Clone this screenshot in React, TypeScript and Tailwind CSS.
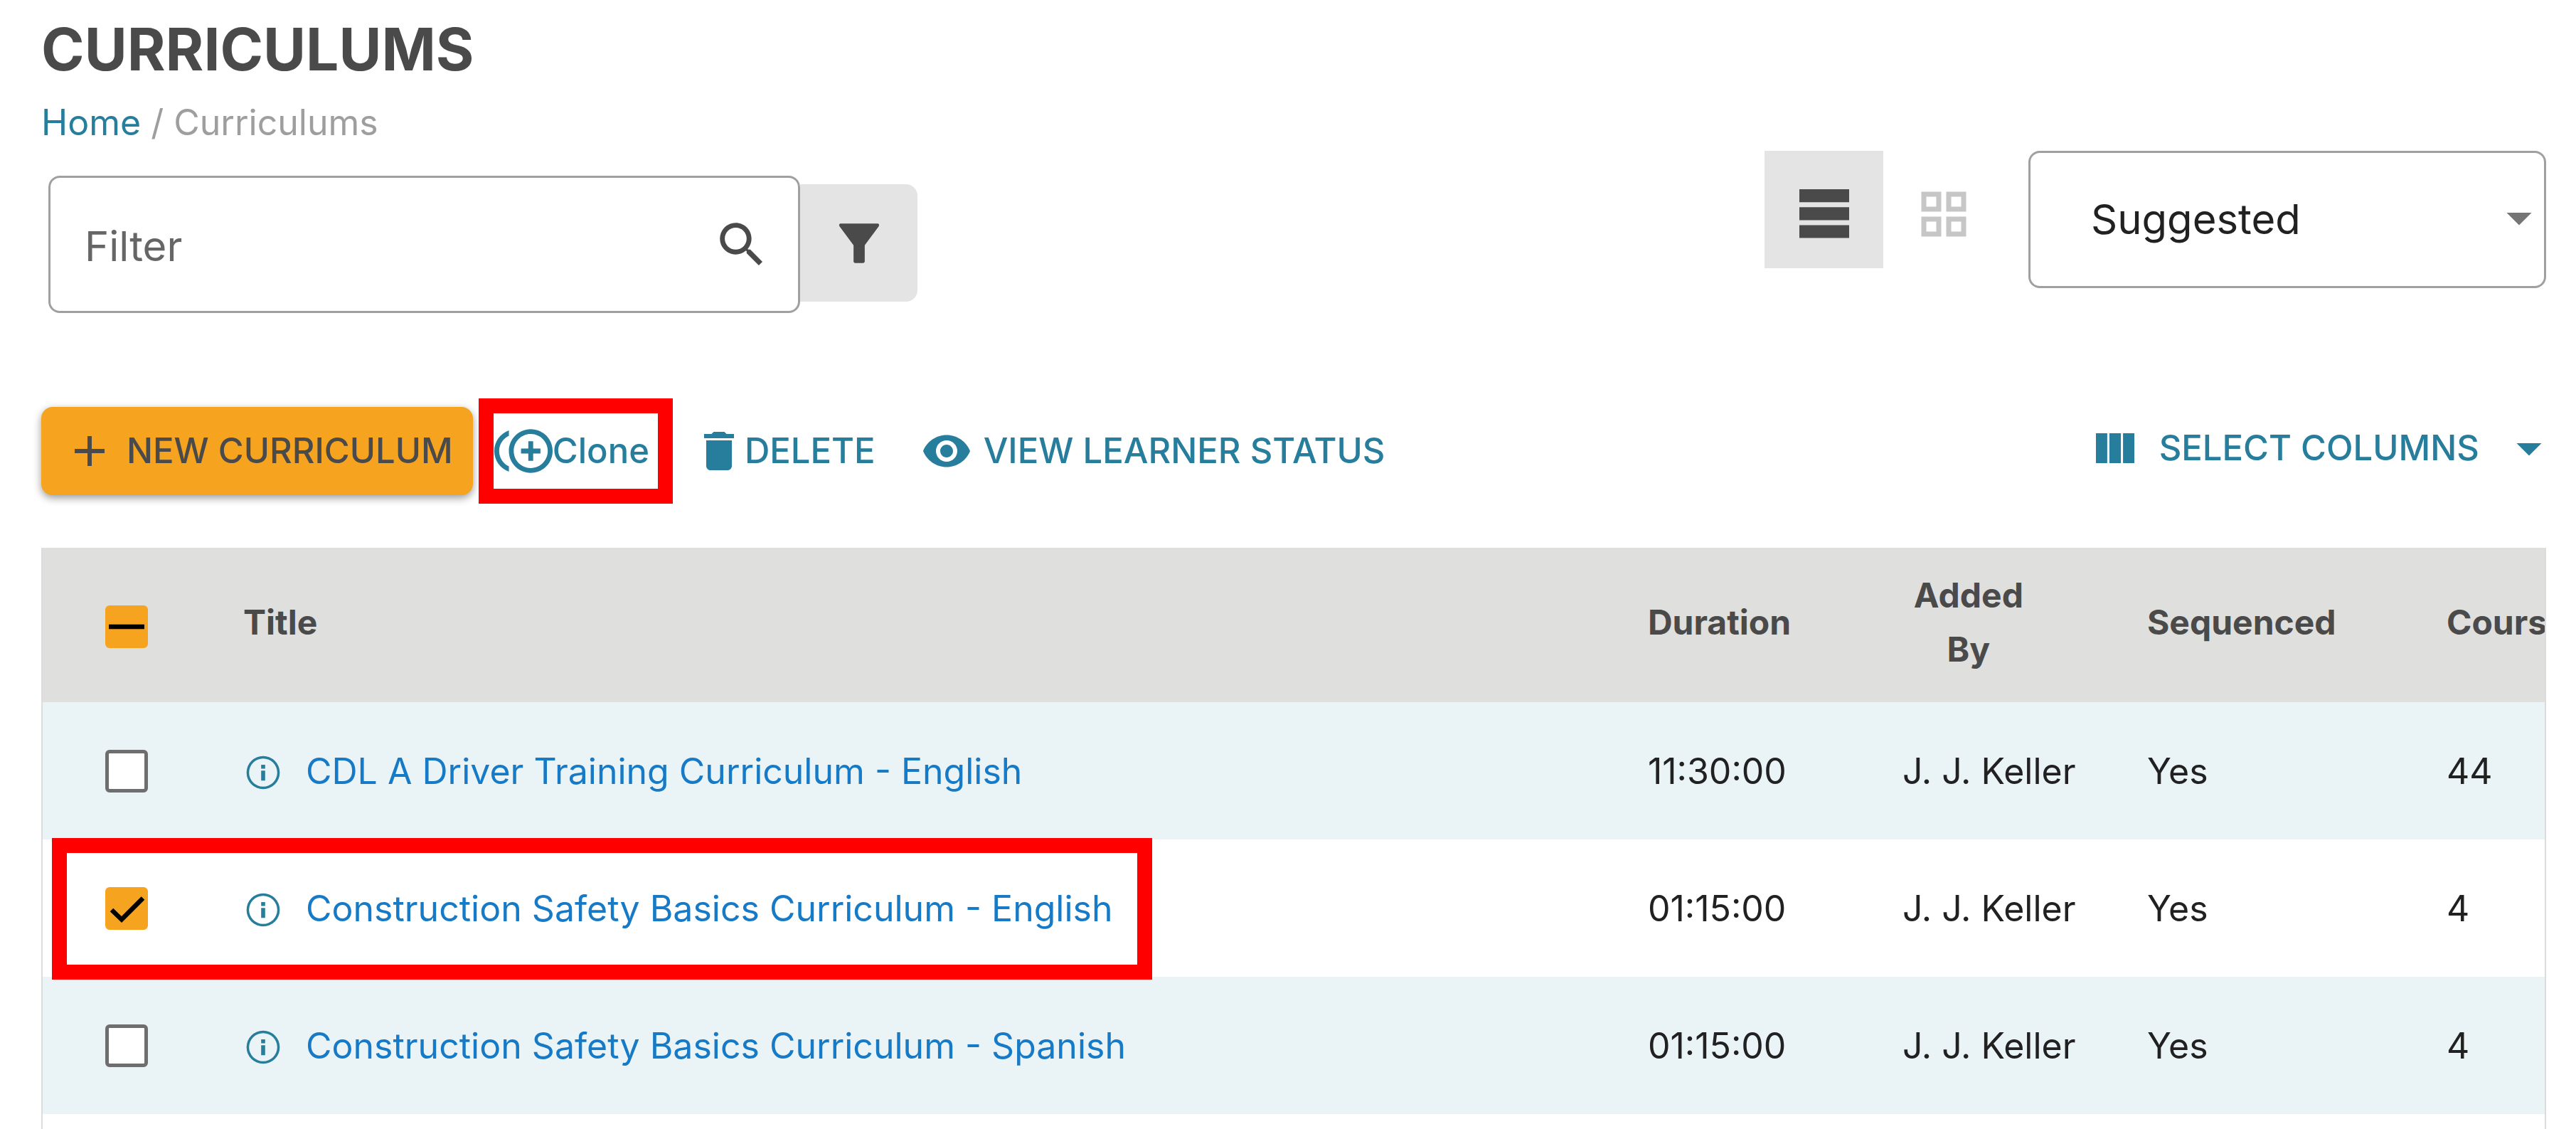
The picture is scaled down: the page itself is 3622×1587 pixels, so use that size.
import { useState } from "react";

interface Curriculum {
  id: number;
  title: string;
  duration: string;
  addedBy: string;
  sequenced: string;
  courses: number;
}

const curriculums: Curriculum[] = [
  {
    id: 1,
    title: "CDL A Driver Training Curriculum - English",
    duration: "11:30:00",
    addedBy: "J. J. Keller",
    sequenced: "Yes",
    courses: 44,
  },
  {
    id: 2,
    title: "Construction Safety Basics Curriculum - English",
    duration: "01:15:00",
    addedBy: "J. J. Keller",
    sequenced: "Yes",
    courses: 4,
  },
  {
    id: 3,
    title: "Construction Safety Basics Curriculum - Spanish",
    duration: "01:15:00",
    addedBy: "J. J. Keller",
    sequenced: "Yes",
    courses: 4,
  },
];

const icons = {
  search:
    "M15.5 14h-.79l-.28-.27C15.41 12.59 16 11.11 16 9.5 16 5.91 13.09 3 9.5 3S3 5.91 3 9.5 5.91 16 9.5 16c1.61 0 3.09-.59 4.23-1.57l.27.28v.79l5 4.99L20.49 19zm-6 0C7.01 14 5 11.99 5 9.5S7.01 5 9.5 5 14 7.01 14 9.5 11.99 14 9.5 14",
  filter:
    "M4.4 3.9h15.2c.6 0 .8.7.4 1.2L14.3 12.8v6.6c0 .4-.3.7-.7.7h-3.2c-.4 0-.7-.3-.7-.7v-6.6L4 5.1c-.4-.5-.2-1.2.4-1.2",
  list: "M2 2h20v5.2H2zM2 9.2h20v5.2H2zM2 16.4h20v5.2H2z",
  grid: "M3 3v8h8V3zm6 6H5V5h4zm-6 4v8h8v-8zm6 6H5v-4h4zm4-16v8h8V3zm6 6h-4V5h4zm-6 4v8h8v-8zm6 6h-4v-4h4z",
  caret: "m7 10 5 5 5-5z",
  plus: "M19 13h-6v6h-2v-6H5v-2h6V5h2v6h6z",
  clone:
    "M16 8h-2v3h-3v2h3v3h2v-3h3v-2h-3zM2 12c0-2.79 1.64-5.2 4.01-6.32V3.52C2.52 4.76 0 8.09 0 12s2.52 7.24 6.01 8.48v-2.16C3.64 17.2 2 14.79 2 12m13-9c-4.96 0-9 4.04-9 9s4.04 9 9 9 9-4.04 9-9-4.04-9-9-9m0 16c-3.86 0-7-3.14-7-7s3.14-7 7-7 7 3.14 7 7-3.14 7-7 7",
  trash: "M6 19c0 1.1.9 2 2 2h8c1.1 0 2-.9 2-2V7H6zM19 4h-3.5l-1-1h-5l-1 1H5v2h14z",
  eye: "M12 4.5C7 4.5 2.73 7.61 1 12c1.73 4.39 6 7.5 11 7.5s9.27-3.11 11-7.5c-1.73-4.39-6-7.5-11-7.5M12 17c-2.76 0-5-2.24-5-5s2.24-5 5-5 5 2.24 5 5-2.24 5-5 5m0-8c-1.66 0-3 1.34-3 3s1.34 3 3 3 3-1.34 3-3-1.34-3-3-3",
  columns: "M3 5h5.3v14H3zM9.3 5h5.4v14H9.3zM15.7 5H21v14h-5.3z",
  info: "M10.8 7.3h2.4v2.3h-2.4zm0 3.5h2.4v6h-2.4zM12 2a10 10 0 1 0 0 20 10 10 0 0 0 0-20m0 18.5a8.5 8.5 0 1 1 0-17 8.5 8.5 0 0 1 0 17",
};

function Icon({ name, className }: { name: keyof typeof icons; className: string }) {
  return (
    <svg viewBox="0 0 24 24" fill="currentColor" aria-hidden="true" className={`shrink-0 ${className}`}>
      <path d={icons[name]} />
    </svg>
  );
}

interface CheckboxProps {
  label: string;
  state: "on" | "off" | "mixed";
  onChange: () => void;
}

function Checkbox({ label, state, onChange }: CheckboxProps) {
  return (
    <span className="grid size-[60px] place-items-center">
      <input
        type="checkbox"
        aria-label={label}
        checked={state === "on"}
        ref={(el) => {
          if (el) el.indeterminate = state === "mixed";
        }}
        onChange={onChange}
        className="col-start-1 row-start-1 size-[60px] cursor-pointer appearance-none rounded-md border-[5px] border-[#6e6e6e] bg-white checked:border-[#f6a31f] checked:bg-[#f6a31f] indeterminate:border-[#f6a31f] indeterminate:bg-[#f6a31f]"
      />
      {state !== "off" && (
        <svg
          viewBox="0 0 60 60"
          fill="none"
          stroke="#000"
          strokeWidth="6.5"
          className="pointer-events-none col-start-1 row-start-1 size-[60px]"
        >
          <path d={state === "on" ? "M9 32 23 45.5 53 15.5" : "M5 30H55"} />
        </svg>
      )}
    </span>
  );
}

export default function App() {
  const [selected, setSelected] = useState<number[]>([2]);
  const [view, setView] = useState("list");

  const toggle = (id: number) => {
    setSelected((prev) => (prev.includes(id) ? prev.filter((s) => s !== id) : [...prev, id]));
  };

  const allState =
    selected.length === 0 ? "off" : selected.length === curriculums.length ? "on" : "mixed";

  return (
    <div className="flex min-h-screen flex-col bg-white pl-[58px] pr-[42px] font-['Inter',sans-serif] text-[#212121]">
      <h1 className="pt-5 text-[82px] font-bold leading-[100px] text-[#4a4a4a]">CURRICULUMS</h1>
      <nav aria-label="Breadcrumb" className="pt-4 text-[50px] leading-[72px] text-[#9e9e9e]">
        <a href="#" className="text-[#267d9c]">
          Home
        </a>{" "}
        / <span>Curriculums</span>
      </nav>

      <div className="flex items-start justify-between pt-1">
        <div className="flex items-start pl-2.5 pt-[35px]">
          <div className="flex h-[193px] w-[1057px] items-center rounded-2xl border-[3px] border-[#a0a0a0] pl-12 pr-[38px]">
            <input
              type="text"
              aria-label="Filter"
              placeholder="Filter"
              className="min-w-0 flex-1 pt-1 text-[58px] leading-[80px] outline-none placeholder:text-[#666666]"
            />
            <button type="button" aria-label="Search">
              <Icon name="search" className="size-[82px] text-[#4a4a4a]" />
            </button>
          </div>
          <button
            type="button"
            aria-label="Filters"
            className="mt-3 flex size-[165px] items-center justify-center rounded-r-2xl bg-[#e4e4e4]"
          >
            <Icon name="filter" className="size-[82px] text-[#4a4a4a]" />
          </button>
        </div>

        <div className="flex items-start">
          <button
            type="button"
            aria-label="List view"
            aria-pressed={view === "list"}
            onClick={() => setView("list")}
            className="flex h-[165px] w-[167px] items-center justify-center bg-[#e4e4e4] pt-3"
          >
            <Icon name="list" className="size-[84px] text-[#4a4a4a]" />
          </button>
          <button
            type="button"
            aria-label="Grid view"
            aria-pressed={view === "grid"}
            onClick={() => setView("grid")}
            className="mr-[34px] flex h-[165px] w-[170px] items-center justify-center pt-3"
          >
            <Icon name="grid" className="size-[84px] text-[#c6c6c6]" />
          </button>
          <div className="relative">
            <select
              aria-label="Sort by"
              className="h-[193px] w-[728px] appearance-none rounded-2xl border-[3px] border-[#a0a0a0] bg-white pl-[85px] text-[58px]"
            >
              <option>Suggested</option>
              <option>Title</option>
            </select>
            <Icon
              name="caret"
              className="pointer-events-none absolute -right-1 top-[52px] size-[84px] text-[#757575]"
            />
          </div>
        </div>
      </div>

      <div className="flex items-center pt-[132px] text-[49px] font-medium text-[#267d9c]">
        <button
          type="button"
          className="flex h-[124px] items-center gap-4 rounded-2xl bg-[#f6a31f] pl-8 pr-7 text-[#4a4a4a] shadow-[0_4px_12px_rgba(0,0,0,0.4)]"
        >
          <Icon name="plus" className="size-[72px]" />
          NEW CURRICULUM
        </button>
        <button type="button" className="relative ml-[30px] flex items-center">
          <Icon name="clone" className="size-[82px]" />
          <span>Clone</span>
          <span className="absolute -bottom-[33px] -left-[22px] -right-[33px] -top-[33px] border-[21px] border-[#ff0000]" />
        </button>
        <button type="button" className="ml-[62px] flex items-center">
          <Icon name="trash" className="size-[72px]" />
          DELETE
        </button>
        <button type="button" className="ml-16 flex items-center gap-4">
          <Icon name="eye" className="size-[72px]" />
          VIEW LEARNER STATUS
        </button>
        <button type="button" className="-mr-[18px] ml-auto flex items-center pb-2">
          <Icon name="columns" className="size-[72px]" />
          <span className="pl-[26px] pr-7">SELECT COLUMNS</span>
          <Icon name="caret" className="size-[84px]" />
        </button>
      </div>

      <div className="mt-[74px] flex-1 overflow-hidden border-x-2 border-[#dcdcdc]">
        <table className="w-[105%] table-fixed text-left text-[50px] leading-[76px]">
          <colgroup>
            <col className="w-[239px]" />
            <col />
            <col className="w-[358px]" />
            <col className="w-[344px]" />
            <col className="w-[421px]" />
            <col className="w-[357px]" />
          </colgroup>
          <thead>
            <tr className="h-[217px] bg-[#dfdfdd] text-5xl leading-[76px] text-[#4a4a4a]">
              <th className="pl-[88px] pt-1">
                <Checkbox
                  label="Select all"
                  state={allState}
                  onChange={() => setSelected(allState === "on" ? [] : curriculums.map((c) => c.id))}
                />
              </th>
              <th className="px-[43px] pb-2">Title</th>
              <th className="px-[43px] pb-2">Duration</th>
              <th className="px-[43px] pb-2 text-center">
                <span className="block w-[186px]">Added By</span>
              </th>
              <th className="px-[43px] pb-2">Sequenced</th>
              <th className="px-[43px] pb-2">Courses</th>
            </tr>
          </thead>
          <tbody>
            {curriculums.map((c) => (
              <tr key={c.id} className="h-[193px] odd:bg-[#eaf3f6]">
                <td className="relative pl-[88px]">
                  <Checkbox
                    label={`Select ${c.title}`}
                    state={selected.includes(c.id) ? "on" : "off"}
                    onChange={() => toggle(c.id)}
                  />
                  {c.id === 2 && (
                    <span className="pointer-events-none absolute -top-0.5 left-[13px] h-[199px] w-[1547px] border-[21px] border-[#ff0000]" />
                  )}
                </td>
                <td className="px-[43px]">
                  <div className="flex items-center gap-8 whitespace-nowrap">
                    <Icon name="info" className="mt-1 size-[56px] text-[#267d9c]" />
                    <a href="#" className="text-[#167ac6]">
                      {c.title}
                    </a>
                  </div>
                </td>
                <td className="px-[43px]">{c.duration}</td>
                <td className="whitespace-nowrap px-[43px]">{c.addedBy}</td>
                <td className="px-[43px]">{c.sequenced}</td>
                <td className="px-[43px]">{c.courses}</td>
              </tr>
            ))}
          </tbody>
        </table>
      </div>
    </div>
  );
}
